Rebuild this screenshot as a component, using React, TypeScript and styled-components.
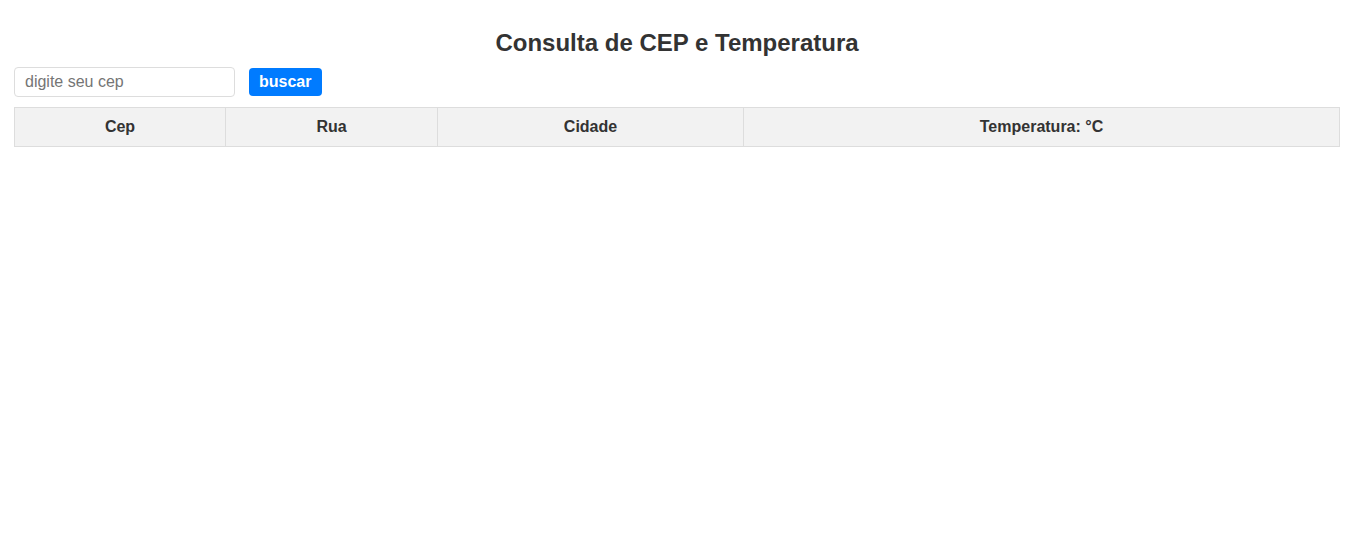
import React from "react";
import styled, { createGlobalStyle } from "styled-components";

const Global = createGlobalStyle`
  html, body { margin: 0; padding: 0; background: #fff; }
  body { font-family: "Liberation Sans", Arial, sans-serif; color: #333; }
`;

const Page = styled.div`
  padding: 0 11px 0 14px;
`;

const Title = styled.h1`
  margin: 28px 0 9px;
  font-size: 24px;
  font-weight: bold;
  text-align: center;
  color: #333;
  line-height: 30px;
`;

const SearchBar = styled.div`
  display: flex;
  align-items: center;
  gap: 14px;
  margin-bottom: 10px;
`;

const Input = styled.input`
  box-sizing: border-box;
  width: 221px;
  height: 30px;
  padding: 0 10px;
  border: 1px solid #ddd;
  border-radius: 4px;
  font-family: "Liberation Sans", Arial, sans-serif;
  font-size: 16px;
  color: #333;
  outline: none;
  &::placeholder { color: #757575; }
`;

const Button = styled.button`
  box-sizing: border-box;
  height: 28px;
  padding: 0 11px 0 10px;
  border: none;
  border-radius: 4px;
  background: #007bff;
  color: #fff;
  font-family: "Liberation Sans", Arial, sans-serif;
  font-size: 16px;
  font-weight: bold;
  cursor: pointer;
`;

const Table = styled.table`
  width: 100%;
  border-collapse: collapse;
  table-layout: fixed;
`;

const Th = styled.th<{ $w: number }>`
  width: ${(p) => p.$w}px;
  height: 39px;
  box-sizing: border-box;
  padding: 0 8px;
  background: #f2f2f2;
  border: 1px solid #ddd;
  font-size: 16px;
  font-weight: bold;
  text-align: center;
  color: #333;
`;

export default function App() {
  return (
    <>
      <Global />
      <Page>
        <Title>Consulta de CEP e Temperatura</Title>
        <SearchBar>
          <Input placeholder="digite seu cep" />
          <Button>buscar</Button>
        </SearchBar>
        <Table>
          <thead>
            <tr>
              <Th $w={211}>Cep</Th>
              <Th $w={212}>Rua</Th>
              <Th $w={306}>Cidade</Th>
              <Th $w={596}>Temperatura: °C</Th>
            </tr>
          </thead>
        </Table>
      </Page>
    </>
  );
}
